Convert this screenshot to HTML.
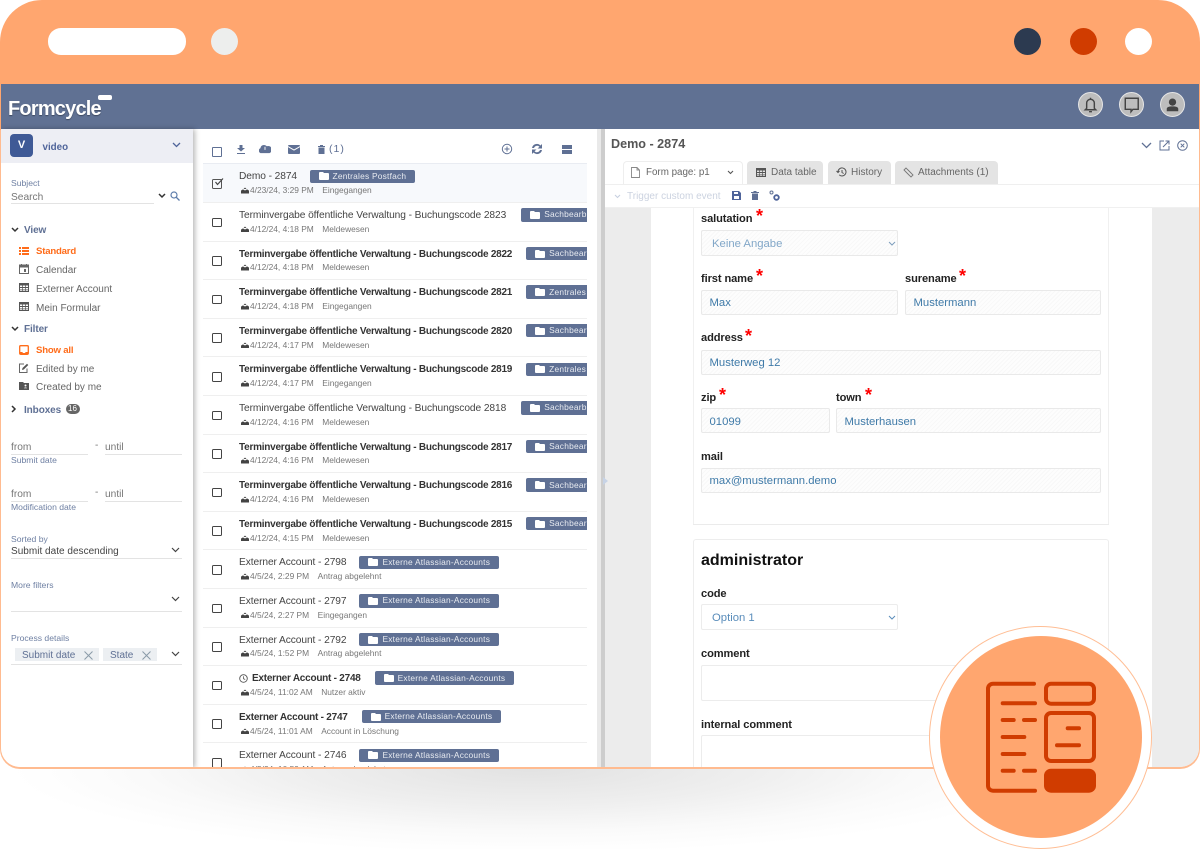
<!DOCTYPE html>
<html><head><meta charset="utf-8"><style>
html,body{margin:0;padding:0;background:#fff}
#p{position:relative;width:1200px;height:849px;overflow:hidden;background:#fff;font-family:"Liberation Sans",sans-serif;color:#555}
.a{position:absolute;white-space:nowrap}
#shadow{position:absolute;left:0;top:768px;width:1200px;height:81px;background:radial-gradient(ellipse 520px 85px at 530px 0,#e2e2e2 0,#efefef 45%,#fafafa 75%,rgba(255,255,255,0) 100%)}
#win{position:absolute;left:0;top:0;width:1200px;height:768.500px;border-radius:42px 42px 20px 20px;background:linear-gradient(#ffa66f 0,#ffa66f 130px,#ffbb90 130px)}
#clip{position:absolute;left:0;top:0;width:1200px;height:768px;clip-path:inset(84px 1px 1px 1px round 0 0 19px 19px);background:#fff}
#hdr{position:absolute;left:1px;top:84px;width:1198px;height:45px;background:#607193}
.dot{position:absolute;border-radius:50%;width:27px;height:27px;top:28px}
.hb{position:absolute;top:92px;width:23px;height:23px;border-radius:50%;background:#bdbdbd;border:1.500px solid #e6e6e6}
#side{position:absolute;left:1px;top:129px;width:192px;height:639px;background:#fff;box-shadow:2px 0 5px rgba(0,0,0,.28)}
.lb{font-size:8.600px;color:#6f80a3}
.it{font-size:10px;color:#666}
.it.on{color:#ff6c1a;font-weight:bold;font-size:9.600px;letter-spacing:-.2px}
.hd{font-size:10px;font-weight:bold;color:#5f7094;letter-spacing:-.1px}
.ln{position:absolute;height:1px;background:#e3e3e3}
#list{position:absolute;left:203px;top:129px;width:384px;height:639px;overflow:hidden;background:#fff}
.r{position:absolute;left:0;width:384px;height:38px;border-bottom:1px solid #efefef}
.cb{position:absolute;left:9px;top:15px;box-sizing:border-box;width:9.500px;height:9.500px;border:1.500px solid #444;border-radius:1.500px}
.ti{position:absolute;left:36px;top:5.700px;white-space:nowrap;font-size:10.200px;letter-spacing:-.08px;line-height:13px;color:#444;display:flex;align-items:center}
.tx{position:relative;top:.6px}
.b .tx{font-weight:bold;color:#333;font-size:10px;letter-spacing:-.24px}
.bd{display:inline-flex;align-items:center;height:13.400px;background:#5f7094;color:#e8ebf1;font-size:8.400px;font-weight:normal;border-radius:2px;padding:0 9px;margin-left:14px;letter-spacing:.22px}
.bd svg{margin-right:4px}
.me{position:absolute;left:37.700px;top:21.300px;white-space:nowrap;font-size:8.400px;line-height:11px;color:#777}
.me svg{vertical-align:-.5px;margin-right:1.300px}
.me span{margin-left:8.500px}
.tab{position:absolute;top:161px;height:23px;background:#e4e4e4;border-radius:4px 4px 0 0;font-size:10px;line-height:24px;color:#666;white-space:nowrap}
.fl{font-size:11.100px;font-weight:bold;color:#222;letter-spacing:-.1px}
.st{color:#f00;font-size:18px;font-weight:bold;line-height:14px;position:absolute}
.inp{position:absolute;box-sizing:border-box;height:25px;border:1px solid #e9e9e9;border-radius:2px;font-size:11.300px;line-height:25px;padding-left:7.500px;color:#3f7aa8;background:repeating-linear-gradient(135deg,#f8f8f8 0,#f8f8f8 1px,#fdfdfd 1px,#fdfdfd 3px)}
.emp{position:absolute;box-sizing:border-box;border:1px solid #ececec;border-radius:2px;background:#fff}
.chip{position:absolute;height:13px;background:#eceff2;font-size:10px;line-height:16px;color:#5f7094;top:648px}
</style></head><body><div id="p">
<svg width="0" height="0" style="position:absolute"><defs>
<symbol id="tray" viewBox="0 0 10 8"><path d="M0 8V4.500L2 3h1l1 1h2l1-1h1l2 1.500V8z" fill="#444"/><path d="M3.200 2.500L5 .5l1.800 2z" fill="#444"/></symbol>
<symbol id="fold" viewBox="0 0 10 8"><path d="M0 1a1 1 0 0 1 1-1h3l1 1h4a1 1 0 0 1 1 1v5a1 1 0 0 1-1 1H1a1 1 0 0 1-1-1z" fill="#fff"/></symbol>
<symbol id="grid" viewBox="0 0 10 9"><path d="M0 0h10v9H0zM1 2.500V4h2.300V2.500zM4 2.500V4h2V2.500zM6.700 2.500V4H9V2.500zM1 5v1.500h2.300V5zM4 5v1.500h2V5zM6.700 5v1.500H9V5zM1 7.300V8h2.300v-.7zM4 7.300V8h2v-.7zM6.700 7.300V8H9v-.7z" fill="#555" fill-rule="evenodd"/></symbol>
</defs></svg>

<div id="shadow"></div>
<div id="win"></div>

<div class="a" style="left:48px;top:28px;width:138px;height:27px;background:#fff;border-radius:13px"></div>
<div class="dot" style="left:211px;background:#edeeed"></div>
<div class="dot" style="left:1014px;background:#2c3a50"></div>
<div class="dot" style="left:1070px;background:#d03c00"></div>
<div class="dot" style="left:1125px;background:#fff"></div>

<div id="clip">
<div id="hdr"></div>
<div class="a" style="left:8px;top:96px;font-size:20px;line-height:26px;font-weight:bold;color:#fff;letter-spacing:-.8px;text-shadow:0 1px 1px rgba(0,0,0,.35)">Formcycle</div>
<div class="a" style="left:98px;top:95px;width:14px;height:4.500px;background:#fff;border-radius:2px"></div>
<div class="hb" style="left:1078px"><svg width="23" height="23" viewBox="0 0 24 24"><path d="M8 16V10.500a4 4 0 0 1 8 0V16l1.500 1.500h-11zM10.500 19.500h3M12 5v1.500" fill="none" stroke="#444" stroke-width="1.500"/></svg></div>
<div class="hb" style="left:1119px"><svg width="23" height="23" viewBox="0 0 24 24"><path d="M5.500 5.500h13.500v11.500H13.500l-2 2.500v-2.500h-6z" fill="none" stroke="#444" stroke-width="1.500"/></svg></div>
<div class="hb" style="left:1160px"><svg width="23" height="23" viewBox="0 0 24 24"><circle cx="12" cy="9.500" r="3.800" fill="#444"/><path d="M6 19v-2.500c0-1.500 2-2.500 6-2.500s6 1 6 2.500V19z" fill="#444"/></svg></div>

<div id="side">
<div class="a" style="left:0;top:0;width:192px;height:34px;background:#edeef4"></div>
<div class="a" style="left:9px;top:5px;width:23px;height:23px;background:#3f5a96;border-radius:4px;color:#fff;font-size:11px;font-weight:bold;line-height:23px;text-align:center">V</div>
<div class="a" style="left:41.500px;top:12px;font-size:9.800px;font-weight:bold;color:#4f649a;line-height:13px">video</div>
<svg class="a" style="left:171px;top:13px" width="9" height="6" viewBox="0 0 9 6"><path d="M1 1l3.500 3.500L8 1" fill="none" stroke="#4f649a" stroke-width="1.300"/></svg>
<div class="a lb" style="left:10px;top:49px">Subject</div>
<div class="a" style="left:10px;top:63px;font-size:10.200px;color:#777">Search</div>
<div class="ln" style="left:10px;top:74px;width:143px"></div>
<svg class="a" style="left:157px;top:64px" width="8" height="6" viewBox="0 0 8 6"><path d="M1 1l3 3 3-3" fill="none" stroke="#333" stroke-width="1.500"/></svg>
<svg class="a" style="left:169px;top:62px" width="10" height="10" viewBox="0 0 10 10"><circle cx="4" cy="4" r="3" fill="none" stroke="#5f7eab" stroke-width="1.200"/><path d="M6 6l3.500 3.500" stroke="#5f7eab" stroke-width="1.300"/></svg>

<svg class="a" style="left:10px;top:98px" width="8" height="6" viewBox="0 0 8 6"><path d="M1 1l3 3 3-3" fill="none" stroke="#333" stroke-width="1.500"/></svg>
<div class="a hd" style="left:23px;top:96px">View</div>
<svg class="a" style="left:18px;top:118px" width="10" height="8" viewBox="0 0 10 8"><path d="M0 0h2v2H0zM3 0h7v2H3zM0 3h2v2H0zM3 3h7v2H3zM0 6h2v2H0zM3 6h7v2H3z" fill="#ff6c1a"/></svg>
<div class="a it on" style="left:35px;top:117px">Standard</div>
<svg class="a" style="left:18px;top:135px" width="10" height="10" viewBox="0 0 10 10"><path d="M.5 1h9v8.500h-9z" fill="none" stroke="#666"/><path d="M0 1h10v2.500H0zM2 0h1v1H2zM7 0h1v1H7zM5 5h2v3H5z" fill="#666"/></svg>
<div class="a it" style="left:35px;top:136px">Calendar</div>
<svg class="a" style="left:18px;top:154px" width="10" height="9"><use href="#grid"/></svg>
<div class="a it" style="left:35px;top:155px">Externer Account</div>
<svg class="a" style="left:18px;top:173px" width="10" height="9"><use href="#grid"/></svg>
<div class="a it" style="left:35px;top:174px">Mein Formular</div>

<svg class="a" style="left:10px;top:197px" width="8" height="6" viewBox="0 0 8 6"><path d="M1 1l3 3 3-3" fill="none" stroke="#333" stroke-width="1.500"/></svg>
<div class="a hd" style="left:23px;top:195px">Filter</div>
<svg class="a" style="left:18px;top:216px" width="10" height="10" viewBox="0 0 10 10"><rect x=".7" y=".7" width="8.600" height="8.600" rx="1" fill="none" stroke="#ff6c1a" stroke-width="1.300"/><path d="M1 7h2.300l.7 1h2l.7-1H9v2.300H1z" fill="#ff6c1a"/></svg>
<div class="a it on" style="left:35px;top:216px">Show all</div>
<svg class="a" style="left:18px;top:234px" width="10" height="10" viewBox="0 0 10 10"><path d="M8 5.500V9.500H.5V1H5" fill="none" stroke="#666"/><path d="M3 7l.5-2L8 .8 9.300 2 4.800 6.500z" fill="#555"/></svg>
<div class="a it" style="left:35px;top:235px">Edited by me</div>
<svg class="a" style="left:18px;top:253px" width="10" height="8" viewBox="0 0 10 8"><path d="M0 0h4l1 1h5v7H0z" fill="#555"/><circle cx="6.500" cy="3.500" r="1" fill="#fff"/><path d="M5 6.300c0-1 3-1 3 0z" fill="#fff"/></svg>
<div class="a it" style="left:35px;top:253px">Created by me</div>
<svg class="a" style="left:10px;top:276px" width="6" height="8" viewBox="0 0 6 8"><path d="M1 1l3 3-3 3" fill="none" stroke="#333" stroke-width="1.500"/></svg>
<div class="a hd" style="left:23px;top:276px">Inboxes</div>
<div class="a" style="left:64.500px;top:275px;width:14px;height:10px;border-radius:5px;background:#666;color:#fff;font-size:8px;line-height:10px;text-align:center">16</div>

<div class="a" style="left:10px;top:313px;font-size:10.200px;color:#777">from</div>
<div class="ln" style="left:10px;top:325px;width:77px"></div>
<div class="a" style="left:94px;top:311px;font-size:10px;color:#777">-</div>
<div class="a" style="left:104px;top:313px;font-size:10.200px;color:#777">until</div>
<div class="ln" style="left:104px;top:325px;width:77px"></div>
<div class="a lb" style="left:10px;top:326px">Submit date</div>

<div class="a" style="left:10px;top:360px;font-size:10.200px;color:#777">from</div>
<div class="ln" style="left:10px;top:372px;width:77px"></div>
<div class="a" style="left:94px;top:358px;font-size:10px;color:#777">-</div>
<div class="a" style="left:104px;top:360px;font-size:10.200px;color:#777">until</div>
<div class="ln" style="left:104px;top:372px;width:77px"></div>
<div class="a lb" style="left:10px;top:373px">Modification date</div>

<div class="a lb" style="left:10px;top:405px">Sorted by</div>
<div class="a" style="left:10px;top:417px;font-size:10px;color:#444;letter-spacing:.02px">Submit date descending</div>
<div class="ln" style="left:10px;top:429px;width:171px"></div>
<svg class="a" style="left:170px;top:418px" width="9" height="6" viewBox="0 0 9 6"><path d="M1 1l3.500 3.500L8 1" fill="none" stroke="#444" stroke-width="1.200"/></svg>
<div class="a lb" style="left:10px;top:451px">More filters</div>
<div class="ln" style="left:10px;top:482px;width:171px"></div>
<svg class="a" style="left:170px;top:467px" width="9" height="6" viewBox="0 0 9 6"><path d="M1 1l3.500 3.500L8 1" fill="none" stroke="#444" stroke-width="1.200"/></svg>
<div class="a lb" style="left:10px;top:504px">Process details</div>
<div class="ln" style="left:10px;top:535px;width:171px"></div>
<svg class="a" style="left:170px;top:522px" width="9" height="6" viewBox="0 0 9 6"><path d="M1 1l3.500 3.500L8 1" fill="none" stroke="#444" stroke-width="1.200"/></svg>
</div>
<div class="chip" style="left:15px;width:84px;padding-left:7px;box-sizing:border-box">Submit date<svg class="a" style="left:69px;top:3px" width="9" height="9" viewBox="0 0 9 9"><path d="M.5.500l8 8M8.500.500l-8 8" stroke="#8a9aa8"/></svg></div>
<div class="chip" style="left:103px;width:54px;padding-left:7px;box-sizing:border-box">State<svg class="a" style="left:39px;top:3px" width="9" height="9" viewBox="0 0 9 9"><path d="M.5.500l8 8M8.500.500l-8 8" stroke="#8a9aa8"/></svg></div>

<div id="list">
<div class="a" style="left:9px;top:18px;box-sizing:border-box;width:9.500px;height:9.500px;border:1.500px solid #5f7094;border-radius:1px"></div>
<svg class="a" style="left:34px;top:16px" width="8" height="9" viewBox="0 0 8 9"><path d="M2.500 0h3v3H8L4 6.500 0 3h2.500zM0 8h8v1H0z" fill="#5f7094"/></svg>
<svg class="a" style="left:56px;top:15px" width="12" height="10" viewBox="0 0 12 11"><path d="M1 10a3 3 0 0 1 0-5.500A4 4 0 0 1 8 2.500a3.500 3.500 0 0 1 3 7.500z" fill="#5f7094"/><path d="M6 3v3.500" stroke="#fff"/></svg>
<svg class="a" style="left:85px;top:16px" width="12" height="9" viewBox="0 0 12 9"><rect width="12" height="9" rx="1" fill="#5f7094"/><path d="M0 1.500L6 5l6-3.500" fill="none" stroke="#fff"/></svg>
<svg class="a" style="left:115px;top:16px" width="7" height="9" viewBox="0 0 7 9"><path d="M0 1h7v1H0zM2 0h3v1H2zM.5 2.500h6V9h-6z" fill="#5f7094"/></svg>
<div class="a" style="left:126px;top:14px;font-size:10.500px;color:#5f7094;letter-spacing:1px">(1)</div>
<svg class="a" style="left:298px;top:14px" width="12" height="12" viewBox="0 0 12 12"><circle cx="6" cy="6" r="4.700" fill="none" stroke="#5f7094"/><path d="M6 3.500v5M3.500 6h5" stroke="#5f7094"/></svg>
<svg class="a" style="left:328px;top:14px" width="12" height="12" viewBox="0 0 12 12"><path d="M1 5A5 5 0 0 1 9.500 2.500l1.500-1.500V5.500H6.500L8.500 3.800A3.300 3.300 0 0 0 3 5zM11 7A5 5 0 0 1 2.500 9.500L1 11V6.500h4.500L3.500 8.200A3.300 3.300 0 0 0 9 7z" fill="#5f7094"/></svg>
<svg class="a" style="left:359px;top:16px" width="10" height="9" viewBox="0 0 10 9"><path d="M0 0h10v4H0zM0 5h10v4H0z" fill="#5f7094"/></svg>
<div class="ln" style="left:0;top:34px;width:384px;background:#e9ecf2"></div>

<div class="r" style="top:35px;background:#f7f9fc"><div class="cb" style="border-color:#555;border-width:1.200px"></div><svg class="a" style="left:11px;top:14px" width="10" height="9" viewBox="0 0 10 9"><path d="M1.500 4l2 2.500L9 .5" fill="none" stroke="#444" stroke-width="1.200"/></svg><div class="ti"><span class="tx">Demo - 2874</span><span class="bd" style="margin-left:12.500px"><svg width="10" height="8"><use href="#fold"/></svg>Zentrales Postfach</span></div><div class="me"><svg width="8" height="6.500"><use href="#tray"/></svg>4/23/24, 3:29 PM<span>Eingegangen</span></div></div>
<div class="r" style="top:73.600px"><div class="cb"></div><div class="ti"><span class="tx">Terminvergabe öffentliche Verwaltung - Buchungscode 2823</span><span class="bd" style="margin-left:15px"><svg width="10" height="8"><use href="#fold"/></svg>Sachbearbeitung</span></div><div class="me"><svg width="8" height="6.500"><use href="#tray"/></svg>4/12/24, 4:18 PM<span>Meldewesen</span></div></div>
<div class="r b" style="top:112.200px"><div class="cb"></div><div class="ti"><span class="tx">Terminvergabe öffentliche Verwaltung - Buchungscode 2822</span><span class="bd"><svg width="10" height="8"><use href="#fold"/></svg>Sachbearbeitung</span></div><div class="me"><svg width="8" height="6.500"><use href="#tray"/></svg>4/12/24, 4:18 PM<span>Meldewesen</span></div></div>
<div class="r b" style="top:150.800px"><div class="cb"></div><div class="ti"><span class="tx">Terminvergabe öffentliche Verwaltung - Buchungscode 2821</span><span class="bd"><svg width="10" height="8"><use href="#fold"/></svg>Zentrales Postfach</span></div><div class="me"><svg width="8" height="6.500"><use href="#tray"/></svg>4/12/24, 4:18 PM<span>Eingegangen</span></div></div>
<div class="r b" style="top:189.400px"><div class="cb"></div><div class="ti"><span class="tx">Terminvergabe öffentliche Verwaltung - Buchungscode 2820</span><span class="bd"><svg width="10" height="8"><use href="#fold"/></svg>Sachbearbeitung</span></div><div class="me"><svg width="8" height="6.500"><use href="#tray"/></svg>4/12/24, 4:17 PM<span>Meldewesen</span></div></div>
<div class="r b" style="top:228px"><div class="cb"></div><div class="ti"><span class="tx">Terminvergabe öffentliche Verwaltung - Buchungscode 2819</span><span class="bd"><svg width="10" height="8"><use href="#fold"/></svg>Zentrales Postfach</span></div><div class="me"><svg width="8" height="6.500"><use href="#tray"/></svg>4/12/24, 4:17 PM<span>Eingegangen</span></div></div>
<div class="r" style="top:266.600px"><div class="cb"></div><div class="ti"><span class="tx">Terminvergabe öffentliche Verwaltung - Buchungscode 2818</span><span class="bd" style="margin-left:15px"><svg width="10" height="8"><use href="#fold"/></svg>Sachbearbeitung</span></div><div class="me"><svg width="8" height="6.500"><use href="#tray"/></svg>4/12/24, 4:16 PM<span>Meldewesen</span></div></div>
<div class="r b" style="top:305.200px"><div class="cb"></div><div class="ti"><span class="tx">Terminvergabe öffentliche Verwaltung - Buchungscode 2817</span><span class="bd"><svg width="10" height="8"><use href="#fold"/></svg>Sachbearbeitung</span></div><div class="me"><svg width="8" height="6.500"><use href="#tray"/></svg>4/12/24, 4:16 PM<span>Meldewesen</span></div></div>
<div class="r b" style="top:343.800px"><div class="cb"></div><div class="ti"><span class="tx">Terminvergabe öffentliche Verwaltung - Buchungscode 2816</span><span class="bd"><svg width="10" height="8"><use href="#fold"/></svg>Sachbearbeitung</span></div><div class="me"><svg width="8" height="6.500"><use href="#tray"/></svg>4/12/24, 4:16 PM<span>Meldewesen</span></div></div>
<div class="r b" style="top:382.400px"><div class="cb"></div><div class="ti"><span class="tx">Terminvergabe öffentliche Verwaltung - Buchungscode 2815</span><span class="bd"><svg width="10" height="8"><use href="#fold"/></svg>Sachbearbeitung</span></div><div class="me"><svg width="8" height="6.500"><use href="#tray"/></svg>4/12/24, 4:15 PM<span>Meldewesen</span></div></div>
<div class="r" style="top:421px"><div class="cb"></div><div class="ti"><span class="tx">Externer Account - 2798</span><span class="bd" style="margin-left:13px"><svg width="10" height="8"><use href="#fold"/></svg>Externe Atlassian-Accounts</span></div><div class="me"><svg width="8" height="6.500"><use href="#tray"/></svg>4/5/24, 2:29 PM<span>Antrag abgelehnt</span></div></div>
<div class="r" style="top:459.600px"><div class="cb"></div><div class="ti"><span class="tx">Externer Account - 2797</span><span class="bd" style="margin-left:13px"><svg width="10" height="8"><use href="#fold"/></svg>Externe Atlassian-Accounts</span></div><div class="me"><svg width="8" height="6.500"><use href="#tray"/></svg>4/5/24, 2:27 PM<span>Eingegangen</span></div></div>
<div class="r" style="top:498.200px"><div class="cb"></div><div class="ti"><span class="tx">Externer Account - 2792</span><span class="bd" style="margin-left:13px"><svg width="10" height="8"><use href="#fold"/></svg>Externe Atlassian-Accounts</span></div><div class="me"><svg width="8" height="6.500"><use href="#tray"/></svg>4/5/24, 1:52 PM<span>Antrag abgelehnt</span></div></div>
<div class="r b" style="top:536.800px"><div class="cb"></div><div class="ti"><svg width="9" height="9" viewBox="0 0 9 9" style="margin-right:4px"><circle cx="4.500" cy="4.500" r="3.800" fill="none" stroke="#555" stroke-width=".9"/><path d="M4.500 2.200v2.500l1.700.8" fill="none" stroke="#555" stroke-width=".8"/></svg><span class="tx">Externer Account - 2748</span><span class="bd"><svg width="10" height="8"><use href="#fold"/></svg>Externe Atlassian-Accounts</span></div><div class="me"><svg width="8" height="6.500"><use href="#tray"/></svg>4/5/24, 11:02 AM<span>Nutzer aktiv</span></div></div>
<div class="r b" style="top:575.400px"><div class="cb"></div><div class="ti"><span class="tx">Externer Account - 2747</span><span class="bd"><svg width="10" height="8"><use href="#fold"/></svg>Externe Atlassian-Accounts</span></div><div class="me"><svg width="8" height="6.500"><use href="#tray"/></svg>4/5/24, 11:01 AM<span>Account in Löschung</span></div></div>
<div class="r" style="top:614px"><div class="cb"></div><div class="ti"><span class="tx">Externer Account - 2746</span><span class="bd" style="margin-left:13px"><svg width="10" height="8"><use href="#fold"/></svg>Externe Atlassian-Accounts</span></div><div class="me"><svg width="8" height="6.500"><use href="#tray"/></svg>4/5/24, 10:59 AM<span>Antrag abgelehnt</span></div></div>
</div>

<div class="a" style="left:597px;top:129px;width:4px;height:639px;background:#e9e9e9"></div>
<div class="a" style="left:601px;top:129px;width:4px;height:639px;background:#cdcdcd"></div>

<div class="a" style="left:605px;top:184px;width:594px;height:1px;background:#efefef"></div>
<div class="a" style="left:605px;top:208px;width:46px;height:560px;background:#ececec"></div>
<div class="a" style="left:1152px;top:208px;width:47px;height:560px;background:#ececec"></div>
<div class="a" style="left:605px;top:207px;width:594px;height:1px;background:#f0f0f0"></div>
<svg class="a" style="left:603px;top:477px" width="5" height="8" viewBox="0 0 5 8"><path d="M0 0l5 4-5 4z" fill="#c7d3e6"/></svg>

<div class="a" style="left:611px;top:137px;font-size:12.600px;font-weight:bold;color:#555;line-height:15px">Demo - 2874</div>
<svg class="a" style="left:1141px;top:142px" width="11" height="7" viewBox="0 0 11 7"><path d="M1 1l4.500 4.500L10 1" fill="none" stroke="#5f7094" stroke-width="1.300"/></svg>
<svg class="a" style="left:1159px;top:140px" width="11" height="11" viewBox="0 0 11 11"><path d="M5 1H1v9h9V6" fill="none" stroke="#5f7094"/><path d="M4 7l5.500-5.500M6.500 1H10v3.500" fill="none" stroke="#5f7094"/></svg>
<svg class="a" style="left:1177px;top:140px" width="11" height="11" viewBox="0 0 11 11"><circle cx="5.500" cy="5.500" r="4.800" fill="none" stroke="#5f7094"/><path d="M3.700 3.700l3.600 3.600M7.300 3.700l-3.600 3.600" stroke="#5f7094"/></svg>

<div class="a" style="left:623px;top:161px;width:120px;height:23px;background:#fff;border:1px solid #eee;border-bottom:none;box-sizing:border-box;border-radius:4px 4px 0 0"></div>
<svg class="a" style="left:631px;top:167px" width="9" height="11" viewBox="0 0 9 11"><path d="M.5.500h5.500l2.500 2.500v7.500H.5zM6 .5V3h2.500" fill="none" stroke="#888" stroke-width=".9"/></svg>
<div class="a" style="left:646px;top:161px;font-size:9.800px;line-height:24px;color:#666">Form page: p1</div>
<svg class="a" style="left:727px;top:170px" width="7" height="5" viewBox="0 0 7 5"><path d="M1 1l2.500 2.500L6 1" fill="none" stroke="#555" stroke-width="1.100"/></svg>
<div class="tab" style="left:747px;width:76px;padding-left:24px;box-sizing:border-box">Data table<svg class="a" style="left:9px;top:7px" width="10" height="9"><use href="#grid"/></svg></div>
<div class="tab" style="left:828px;width:63px;padding-left:23px;box-sizing:border-box">History<svg class="a" style="left:8px;top:6px" width="11" height="10" viewBox="0 0 11 10"><path d="M2 5a4 4 0 1 1 1.200 2.800M.5 4L2 5.500 3.500 4M6 3v2.500l1.700 1" fill="none" stroke="#555" stroke-width="1"/></svg></div>
<div class="tab" style="left:895px;width:103px;padding-left:23px;box-sizing:border-box">Attachments (1)<svg class="a" style="left:8px;top:6px" width="11" height="11" viewBox="0 0 11 11"><path d="M1 3l2-2 7 7-2 2zM2.500 4.500l4 4M4.500 2.500l4 4" fill="none" stroke="#777" stroke-width=".9"/></svg></div>
<svg class="a" style="left:614px;top:194px" width="7" height="5" viewBox="0 0 7 5"><path d="M1 1l2.500 2.500L6 1" fill="none" stroke="#c8d0e0" stroke-width="1.100"/></svg>
<div class="a" style="left:627px;top:190px;font-size:10px;line-height:13px;color:#ccd3e0">Trigger custom event</div>
<svg class="a" style="left:732px;top:191px" width="9" height="9" viewBox="0 0 9 9"><path d="M0 0h7l2 2v7H0zM2 1v2h4V1zM2 5v3h5V5z" fill="#4f649a" fill-rule="evenodd"/></svg>
<svg class="a" style="left:751px;top:191px" width="8" height="9" viewBox="0 0 8 9"><path d="M0 1h8v1H0zM2.500 0h3v1h-3zM1 2.500h6V9H1z" fill="#5f7094"/></svg>
<svg class="a" style="left:769px;top:190px" width="11" height="11" viewBox="0 0 11 11"><circle cx="2.500" cy="2.500" r="1.500" fill="none" stroke="#5f7094"/><circle cx="7.500" cy="7.500" r="2.300" fill="none" stroke="#4f649a" stroke-width="1.800"/></svg>

<div class="a" style="left:693px;top:208px;width:1px;height:317px;background:#f0f0f0"></div>
<div class="a" style="left:1108px;top:208px;width:1px;height:317px;background:#f0f0f0"></div>
<div class="a" style="left:693px;top:524px;width:416px;height:1px;background:#ebebeb"></div>
<div class="a" style="left:693px;top:539px;width:416px;height:229px;border:1px solid #ededed;border-bottom:none;box-sizing:border-box;border-radius:3px 3px 0 0"></div>

<div class="a fl" style="left:701px;top:213px">salutation</div><div class="st" style="left:756px;top:209px">*</div>
<div class="inp" style="left:701px;top:230px;width:197px;padding-left:10px;color:#82a7c8;height:26px;line-height:27px">Keine Angabe<svg class="a" style="left:186px;top:10px" width="8" height="5" viewBox="0 0 8 5"><path d="M1 1l3 3 3-3" fill="none" stroke="#7f9fbd"/></svg></div>
<div class="a fl" style="left:701px;top:273px">first name</div><div class="st" style="left:756px;top:269px">*</div>
<div class="inp" style="left:701px;top:290px;width:197px">Max</div>
<div class="a fl" style="left:905px;top:273px">surename</div><div class="st" style="left:959px;top:269px">*</div>
<div class="inp" style="left:905px;top:290px;width:196px">Mustermann</div>
<div class="a fl" style="left:701px;top:332px">address</div><div class="st" style="left:745px;top:329px">*</div>
<div class="inp" style="left:701px;top:350px;width:400px">Musterweg 12</div>
<div class="a fl" style="left:701px;top:392px">zip</div><div class="st" style="left:719px;top:388px">*</div>
<div class="inp" style="left:701px;top:408px;width:129px;line-height:27px">01099</div>
<div class="a fl" style="left:836px;top:392px">town</div><div class="st" style="left:865px;top:388px">*</div>
<div class="inp" style="left:836px;top:408px;width:265px;line-height:27px">Musterhausen</div>
<div class="a fl" style="left:701px;top:451px">mail</div>
<div class="inp" style="left:701px;top:468px;width:400px">max@mustermann.demo</div>

<div class="a" style="left:701px;top:551px;font-size:16px;font-weight:bold;color:#111;line-height:20px">administrator</div>
<div class="a fl" style="left:701px;top:588px">code</div>
<div class="emp" style="left:701px;top:604px;width:197px;height:26px;font-size:11.300px;line-height:27px;padding-left:10px;color:#5a8dbb">Option 1<svg class="a" style="left:186px;top:10px" width="8" height="5" viewBox="0 0 8 5"><path d="M1 1l3 3 3-3" fill="none" stroke="#5a8dbb"/></svg></div>
<div class="a fl" style="left:701px;top:648px">comment</div>
<div class="emp" style="left:701px;top:665px;width:400px;height:36px"></div>
<div class="a fl" style="left:701px;top:719px">internal comment</div>
<div class="emp" style="left:701px;top:735px;width:400px;height:40px"></div>
</div>

<div class="a" style="left:929px;top:625.500px;width:223px;height:223px;box-sizing:border-box;border:1px solid #ffbe95;border-radius:50%;background:#fff"></div>
<div class="a" style="left:939.500px;top:636px;width:202px;height:202px;border-radius:50%;background:#ffa66f"></div>
<svg class="a" style="left:985px;top:681px" width="112" height="112" viewBox="0 0 112 112">
<path d="M49 2.700H8a5 5 0 0 0-5 5V104.700a5 5 0 0 0 5 5H50" fill="none" stroke="#d03c00" stroke-width="4" stroke-linecap="round"/>
<path d="M17.700 22.300H50M17.700 39H28.700M39 39H50M17.700 56H39.300M17.700 73H39.300M17.700 89.700H28.700M39 89.700H50" fill="none" stroke="#d03c00" stroke-width="4" stroke-linecap="round"/>
<rect x="61" y="2.700" width="48" height="20" rx="5" fill="none" stroke="#d03c00" stroke-width="4"/>
<rect x="61" y="32" width="48" height="48" rx="5" fill="none" stroke="#d03c00" stroke-width="4"/>
<path d="M82.700 47.300H94M72 64.300H94" fill="none" stroke="#d03c00" stroke-width="4" stroke-linecap="round"/>
<rect x="59" y="87.700" width="52" height="24" rx="7" fill="#d03c00"/>
</svg>
</div></body></html>
